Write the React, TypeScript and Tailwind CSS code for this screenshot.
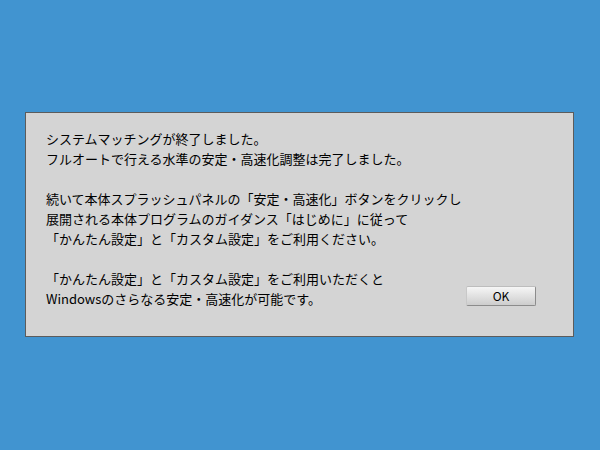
export default function App() {
  return (
    <div
      className="w-[600px] h-[450px] bg-[#4194d0] pl-[25px] pt-[112px]"
      style={{ fontFamily: '"Noto Sans CJK JP", "Noto Sans", sans-serif' }}
    >
      <div className="w-[549px] h-[225px] bg-[#d4d4d4] border border-[#5c5c5c] pl-[20px] pr-[37px] pt-[16px] text-[13px] leading-[20px] text-black">
        <p>システムマッチングが終了しました。</p>
        <p>フルオートで行える水準の安定・高速化調整は完了しました。</p>
        <p className="mt-[20px]">続いて本体スプラッシュパネルの「安定・高速化」ボタンをクリックし</p>
        <p>展開される本体プログラムのガイダンス「はじめに」に従って</p>
        <p>「かんたん設定」と「カスタム設定」をご利用ください。</p>
        <div className="mt-[20px] flex items-end justify-between">
          <div>
            <p>「かんたん設定」と「カスタム設定」をご利用いただくと</p>
            <p>Windowsのさらなる安定・高速化が可能です。</p>
          </div>
          <button className="mb-[3px] w-[70px] h-[20px] rounded-[2px] border border-[#8c8c8c] border-l-[#c8c8c8] border-t-[#bdbdbd] bg-gradient-to-b from-[#f6f6f6] to-[#cdcdcd] text-[12px] leading-[18px] text-black">
            OK
          </button>
        </div>
      </div>
    </div>
  );
}
